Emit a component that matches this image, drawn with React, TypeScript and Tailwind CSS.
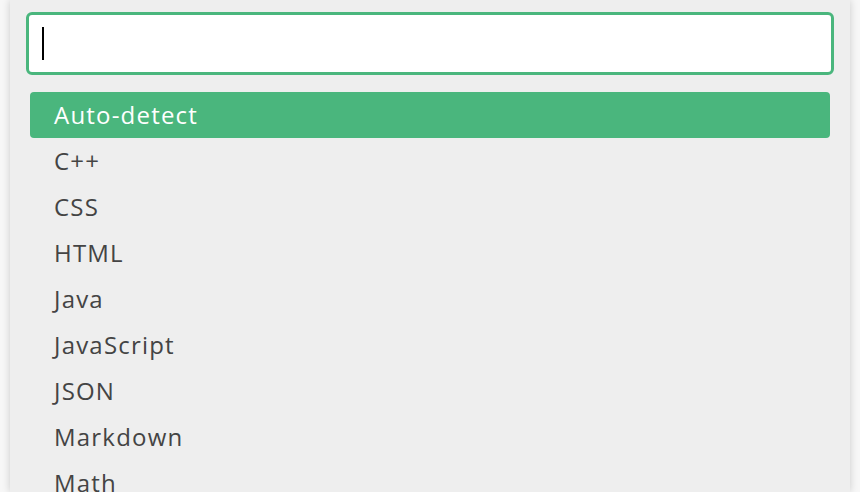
const LANGS = ['Auto-detect', 'C++', 'CSS', 'HTML', 'Java', 'JavaScript', 'JSON', 'Markdown', 'Math']

export default function App() {
  return (
    <div className="h-[492px] w-[860px] overflow-hidden bg-[#f7f7f7] font-['Open_Sans',sans-serif]">
      <div className="mx-[10px] h-full bg-[#eeeeee] px-4 pt-3 shadow-[0_0_8px_rgba(0,0,0,0.18)]">
        <div className="flex h-[63px] items-center rounded-[6px] border-[3px] border-[#4ab67d] bg-white px-[13px]">
          <span className="h-[33px] w-[2px] bg-black" />
        </div>
        <ul className="mt-[17px] px-1">
          {LANGS.map((name, i) => (
            <li
              key={name}
              className={`flex h-[46px] items-center rounded-[4px] px-6 text-[24px] tracking-[0.05em] ${
                i === 0 ? 'bg-[#4ab67d] text-white' : 'text-[#444444]'
              }`}
            >
              {name}
            </li>
          ))}
        </ul>
      </div>
    </div>
  )
}
